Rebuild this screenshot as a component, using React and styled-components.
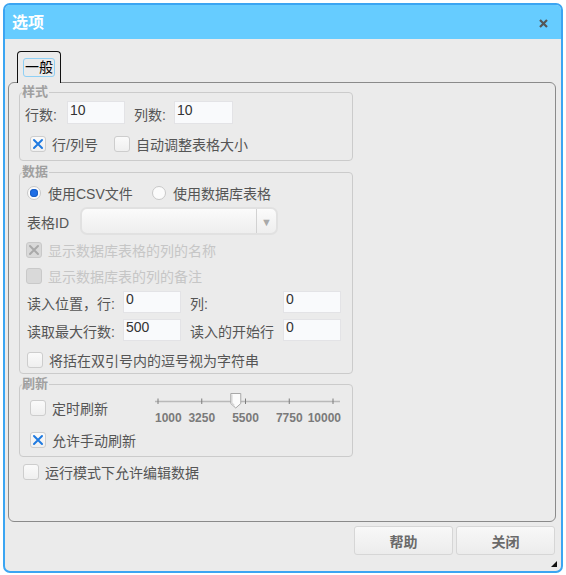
import React from 'react';
import styled, { createGlobalStyle } from 'styled-components';

const GlobalStyle = createGlobalStyle`
    body {
        margin: 0;
        background: #ffffff;
        font-family: "Liberation Sans", "Noto Sans CJK SC", sans-serif;
    }
`;

const SLIDER_MIN = 1000;
const SLIDER_MAX = 10000;
const SLIDER_TICKS = [1000, 3250, 5500, 7750, 10000];
const SLIDER_WIDTH = 186;
const TICK_START = 3;
const TICK_SPAN = 175;

const tickX = (v) => TICK_START + ((v - SLIDER_MIN) / (SLIDER_MAX - SLIDER_MIN)) * TICK_SPAN;

const CheckMark = ({ disabled }) => (
    <svg width="16" height="16" viewBox="0 0 16 16">
        <path d="M4 4 L12 12 M12 4 L4 12" stroke={disabled ? '#a9a9a9' : '#1f7ae0'} strokeWidth="2" strokeLinecap="round" fill="none" />
    </svg>
);

const Check = ({ checked, disabled, label, width }) => (
    <Item width={width}>
        <Box disabled={disabled}>{checked && <CheckMark disabled={disabled} />}</Box>
        <ItemText disabled={disabled}>{label}</ItemText>
    </Item>
);

const Radio = ({ checked, label, width }) => (
    <Item width={width} gap={7}>
        <RadioCircle>{checked && <RadioDot />}</RadioCircle>
        <ItemText>{label}</ItemText>
    </Item>
);

const Slider = ({ value }) => {
    const thumb = tickX(value);
    return (
        <SliderWrap>
            <svg width={SLIDER_WIDTH} height="18" viewBox={`0 0 ${SLIDER_WIDTH} 18`}>
                <line x1="0" y1="9.5" x2="185" y2="9.5" stroke="#b9b9b9" strokeWidth="1.5" />
                {SLIDER_TICKS.map((t) => (
                    <line key={t} x1={tickX(t)} y1="6.5" x2={tickX(t)} y2="12" stroke="#7d7d7d" strokeWidth="1" />
                ))}
                <path
                    d={`M${thumb - 5} 1.5 H${thumb + 5} V11.5 L${thumb} 16 L${thumb - 5} 11.5 Z`}
                    fill="#fbfbfb"
                    stroke="#a8a8a8"
                    strokeWidth="1"
                />
                <path d={`M${thumb - 4} 2.5 V11 L${thumb - 1.5} 13.5`} stroke="#d6d6d6" strokeWidth="1.5" fill="none" />
            </svg>
            <TickLabels>
                {SLIDER_TICKS.map((t, i) => {
                    let style;
                    if (i === 0) style = { left: 0 };
                    else if (i === SLIDER_TICKS.length - 1) style = { right: 0 };
                    else style = { left: tickX(t), transform: 'translateX(-50%)' };
                    return (
                        <TickLabel key={t} style={style}>{t}</TickLabel>
                    );
                })}
            </TickLabels>
        </SliderWrap>
    );
};

const App = () => {
    return (
        <>
            <GlobalStyle />
            <Window>
                <TitleBar>
                    <Title>选项</Title>
                    <CloseBtn>
                        <svg width="9" height="9" viewBox="0 0 9 9">
                            <path d="M1 1 L8 8 M8 1 L1 8" stroke="#555" strokeWidth="2.2" />
                        </svg>
                    </CloseBtn>
                </TitleBar>
                <Body>
                    <TabBar>
                        <Tab>
                            <TabLabel>一般</TabLabel>
                        </Tab>
                    </TabBar>
                    <Panel>
                        <Group height={69} top={9} padTop={8} padLeft={5}>
                            <Legend>样式</Legend>
                            <Row height={23}>
                                <FieldLabel width={42}>行数:</FieldLabel>
                                <TextInput width={58} defaultValue="10" />
                                <FieldLabel width={40} left={9}>列数:</FieldLabel>
                                <TextInput width={59} defaultValue="10" />
                            </Row>
                            <Row height={20} top={10} left={5}>
                                <Check checked label="行/列号" width={84} />
                                <Check label="自动调整表格大小" />
                            </Row>
                        </Group>

                        <Group height={202} top={11} padTop={10} padLeft={7}>
                            <Legend>数据</Legend>
                            <Row height={20}>
                                <Radio checked label="使用CSV文件" width={125} />
                                <Radio label="使用数据库表格" />
                            </Row>
                            <Row height={28} top={4}>
                                <FieldLabel width={53}>表格ID</FieldLabel>
                                <Select>
                                    <SelectValue />
                                    <SelectArrow>▼</SelectArrow>
                                </Select>
                            </Row>
                            <Row height={20} top={5} left={-1}>
                                <Check checked disabled label="显示数据库表格的列的名称" />
                            </Row>
                            <Row height={20} top={6} left={-1}>
                                <Check disabled label="显示数据库表的列的备注" />
                            </Row>
                            <Row height={22} top={5}>
                                <FieldLabel width={96}>读入位置，行:</FieldLabel>
                                <TextInput width={58} defaultValue="0" />
                                <FieldLabel width={93} left={9}>列:</FieldLabel>
                                <TextInput width={58} defaultValue="0" />
                            </Row>
                            <Row height={22} top={6}>
                                <FieldLabel width={96}>读取最大行数:</FieldLabel>
                                <TextInput width={58} defaultValue="500" />
                                <FieldLabel width={93} left={9}>读入的开始行</FieldLabel>
                                <TextInput width={58} defaultValue="0" />
                            </Row>
                            <Row height={20} top={9}>
                                <Check label="将括在双引号内的逗号视为字符串" />
                            </Row>
                        </Group>

                        <Group height={73} top={10} padTop={0} padLeft={10}>
                            <Legend>刷新</Legend>
                            <RefreshLayout>
                                <RefreshChecks>
                                    <Row height={20} top={13}>
                                        <Check label="定时刷新" />
                                    </Row>
                                    <Row height={20} top={12}>
                                        <Check checked label="允许手动刷新" />
                                    </Row>
                                </RefreshChecks>
                                <Slider value={5000} />
                            </RefreshLayout>
                        </Group>

                        <Row height={20} top={5} left={4}>
                            <Check label="运行模式下允许编辑数据" />
                        </Row>
                    </Panel>
                    <ButtonRow>
                        <Button>帮助</Button>
                        <Button>关闭</Button>
                    </ButtonRow>
                </Body>
                <Grip />
            </Window>
        </>
    );
};

const Window = styled.div`
    position: relative;
    box-sizing: border-box;
    margin: 3px;
    width: 560px;
    height: 570px;
    border: 2px solid #3ba5f2;
    border-radius: 7px;
    overflow: hidden;
    background: #ebebeb;
    display: flex;
    flex-direction: column;
`;

const TitleBar = styled.div`
    height: 34px;
    flex-shrink: 0;
    background: #66ccff;
    display: flex;
    align-items: center;
    justify-content: space-between;
    padding: 0 13px 0 7px;
`;

const Title = styled.div`
    color: #ffffff;
    font-size: 16px;
    font-weight: bold;
    line-height: 20px;
    padding-top: 1px;
`;

const CloseBtn = styled.div`
    display: flex;
    align-items: center;
    padding-top: 2px;
`;

const Body = styled.div`
    flex: 1;
    display: flex;
    flex-direction: column;
    padding: 12px 5px 0 3px;
`;

const TabBar = styled.div`
    height: 31px;
    display: flex;
    align-items: flex-end;
    padding-left: 9px;
`;

const Tab = styled.div`
    position: relative;
    z-index: 1;
    box-sizing: border-box;
    width: 44px;
    height: 32px;
    margin-bottom: -1px;
    border: 1px solid #111;
    border-bottom: none;
    border-radius: 4px 4px 0 0;
    background: #ebebeb;
    display: flex;
    justify-content: center;
    padding-top: 6px;
`;

const TabLabel = styled.div`
    box-sizing: border-box;
    height: 19px;
    padding: 0 1px;
    border: 1px solid #8fd0f5;
    border-radius: 3px;
    font-size: 14px;
    line-height: 17px;
    color: #000;
`;

const Panel = styled.div`
    box-sizing: border-box;
    height: 440px;
    border: 1px solid #8a8a8a;
    border-radius: 6px;
    padding: 0 0 0 10px;
`;

const Group = styled.div`
    position: relative;
    box-sizing: border-box;
    width: 334px;
    height: ${(p) => p.height}px;
    margin-top: ${(p) => p.top}px;
    padding: ${(p) => p.padTop}px 0 0 ${(p) => p.padLeft}px;
    border: 1px solid #cbcbcb;
    border-radius: 4px;
`;

const Legend = styled.span`
    position: absolute;
    top: -8px;
    left: 2px;
    padding: 0 1px 0 0;
    background: #ebebeb;
    font-size: 13px;
    font-weight: bold;
    line-height: 14px;
    color: #a0a0a0;
`;

const Row = styled.div`
    display: flex;
    align-items: center;
    height: ${(p) => p.height}px;
    margin-top: ${(p) => p.top || 0}px;
    margin-left: ${(p) => p.left || 0}px;
`;

const FieldLabel = styled.span`
    flex-shrink: 0;
    width: ${(p) => p.width}px;
    margin-left: ${(p) => p.left || 0}px;
    font-size: 14px;
    color: #555;
    white-space: nowrap;
    padding-top: 2px;
`;

const TextInput = styled.input`
    box-sizing: border-box;
    width: ${(p) => p.width}px;
    height: 100%;
    margin: 0;
    padding: 0 2px 6px;
    border: 1px solid #e3e3e6;
    background: #f9fafc;
    font-family: "Liberation Sans", "Noto Sans CJK SC", sans-serif;
    font-size: 14px;
    color: #333;
    outline: none;
`;

const Item = styled.div`
    display: flex;
    align-items: center;
    gap: ${(p) => p.gap || 6}px;
    width: ${(p) => (p.width ? `${p.width}px` : 'auto')};
    flex-shrink: 0;
`;

const Box = styled.div`
    box-sizing: border-box;
    width: 16px;
    height: 16px;
    border: 1px solid ${(p) => (p.disabled ? '#c9c9c9' : '#cdcdcd')};
    border-radius: 3px;
    background: ${(p) => (p.disabled ? '#d9d9d9' : 'linear-gradient(#fafafa, #efefef)')};
    display: flex;
    align-items: center;
    justify-content: center;
    & svg {
        margin: -1px;
    }
`;

const ItemText = styled.span`
    font-size: 14px;
    color: ${(p) => (p.disabled ? '#c6c6c6' : '#555')};
    white-space: nowrap;
`;

const RadioCircle = styled.div`
    box-sizing: border-box;
    width: 14px;
    height: 14px;
    border: 1px solid #c8c8c8;
    border-radius: 50%;
    background: #fbfbfb;
    display: flex;
    align-items: center;
    justify-content: center;
`;

const RadioDot = styled.div`
    width: 8px;
    height: 8px;
    border-radius: 50%;
    background: #1f6fe6;
    box-shadow: 0 0 0 1px #1a5fc6 inset;
`;

const Select = styled.div`
    box-sizing: border-box;
    width: 198px;
    height: 28px;
    border: 2px solid #e1e1e1;
    border-radius: 7px;
    background: linear-gradient(#fbfbfb, #eeeeee);
    display: flex;
`;

const SelectValue = styled.div`
    flex: 1;
    border-right: 1px solid #d2d2d2;
`;

const SelectArrow = styled.div`
    width: 19px;
    display: flex;
    align-items: center;
    justify-content: center;
    font-size: 11px;
    color: #a9a9a9;
    padding-top: 2px;
`;

const RefreshLayout = styled.div`
    display: flex;
`;

const RefreshChecks = styled.div`
    width: 125px;
    display: flex;
    flex-direction: column;
`;

const SliderWrap = styled.div`
    margin-top: 7px;
    width: ${SLIDER_WIDTH}px;
    display: flex;
    flex-direction: column;
`;

const TickLabels = styled.div`
    position: relative;
    height: 16px;
`;

const TickLabel = styled.span`
    position: absolute;
    top: 1px;
    font-size: 12px;
    font-weight: bold;
    line-height: 14px;
    color: #7a7a7a;
`;

const ButtonRow = styled.div`
    display: flex;
    justify-content: flex-end;
    gap: 3px;
    margin-top: 4px;
    padding-right: 1px;
`;

const Button = styled.div`
    box-sizing: border-box;
    width: 99px;
    height: 29px;
    border: 1px solid #d6d6d6;
    border-radius: 3px;
    background: linear-gradient(#f8f8f8, #ececec);
    display: flex;
    align-items: center;
    justify-content: center;
    font-size: 14px;
    font-weight: bold;
    color: #6a6a6a;
`;

const Grip = styled.div`
    position: absolute;
    right: 4px;
    bottom: 4px;
    width: 0;
    height: 0;
    border-left: 6px solid transparent;
    border-bottom: 6px solid #111;
`;

export default App;
